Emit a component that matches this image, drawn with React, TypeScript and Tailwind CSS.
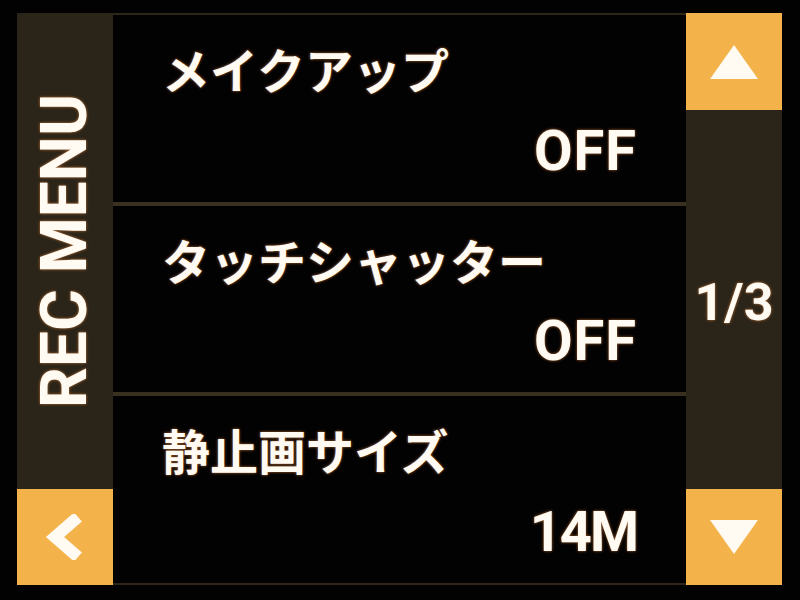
import React from "react";

const labelCls =
  "text-[48px] leading-none font-bold text-[#fffaf2] [font-family:'Noto_Sans_CJK_JP','Noto_Sans',sans-serif] [text-shadow:0_0_3px_rgba(255,150,70,0.7)]";
const valueCls =
  "text-[56px] leading-none font-bold text-[#fffaf2] [font-family:Roboto,'Liberation_Sans',sans-serif] [text-shadow:0_0_3px_rgba(255,150,70,0.7)]";

function Row({ label, value, tight }: { label: string; value: string; tight?: boolean }) {
  return (
    <div className="flex-1 flex flex-col pl-[49px] pr-[49px] pt-[29px] pb-[23px]">
      <div className={labelCls}>{label}</div>
      <div className={"mt-auto self-end " + valueCls + (tight ? " tracking-[-2px]" : " tracking-[1px]")}>{value}</div>
    </div>
  );
}

export default function App() {
  return (
    <div className="w-[800px] h-[600px] bg-[#030202] flex pt-[13px] pl-[17px] pr-[18px] pb-[15px]">
      {/* left column */}
      <div className="w-[96px] flex flex-col">
        <div className="flex-1 bg-[#2b2418] flex items-center justify-center overflow-hidden">
          <div className="-rotate-90 whitespace-nowrap text-[64px] leading-none font-bold text-[#fffaf2] [font-family:Roboto,'Liberation_Sans',sans-serif] [text-shadow:0_0_3px_rgba(255,150,70,0.7)]">
            REC MENU
          </div>
        </div>
        <div className="h-[96px] bg-[#f3b34a] flex items-center justify-center">
          <svg width="42" height="46" viewBox="0 0 42 46">
            <path d="M34 3 L11 23 L34 43" fill="none" stroke="#fffaf2" strokeWidth="12" strokeLinejoin="miter" />
          </svg>
        </div>
      </div>

      {/* center */}
      <div className="flex-1 flex flex-col border-t-2 border-b-2 border-[#2e2619]">
        <Row label="メイクアップ" value="OFF" />
        <div className="h-[4px] bg-[#3a3020]" />
        <Row label="タッチシャッター" value="OFF" />
        <div className="h-[4px] bg-[#3a3020]" />
        <Row label="静止画サイズ" value="14M" tight />
      </div>

      {/* right column */}
      <div className="w-[96px] flex flex-col">
        <div className="h-[97px] bg-[#f3b34a] flex items-center justify-center">
          <svg width="48" height="34" viewBox="0 0 48 34">
            <polygon points="24,0 48,34 0,34" fill="#fffaf2" />
          </svg>
        </div>
        <div className="flex-1 bg-[#2b2418] flex items-center justify-center">
          <div className="text-[52px] leading-none font-bold text-[#fffaf2] [font-family:Roboto,'Liberation_Sans',sans-serif] [text-shadow:0_0_3px_rgba(255,150,70,0.7)] mt-[6px]">
            1/3
          </div>
        </div>
        <div className="h-[96px] bg-[#f3b34a] flex items-center justify-center">
          <svg width="48" height="34" viewBox="0 0 48 34">
            <polygon points="0,0 48,0 24,34" fill="#fffaf2" />
          </svg>
        </div>
      </div>
    </div>
  );
}
